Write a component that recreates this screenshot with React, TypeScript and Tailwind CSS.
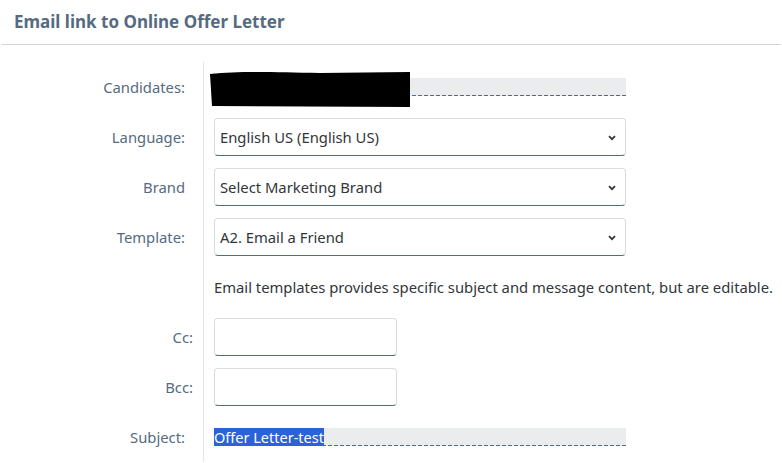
const labelCls = 'flex items-center justify-end border-r border-[#e5e5e5] text-[14.8px] text-[#556b82]';

const dashLine = 'absolute bottom-0 left-0 h-[1px] w-full bg-[repeating-linear-gradient(90deg,#556b82_0_4px,transparent_4px_6px)]';

const SelectBox = ({ value }: { value: string }) => (
    <div className="flex h-[38px] w-[412px] items-center justify-between rounded-[4px] border border-[#d9dde2] border-b-[#556b82] pl-[5px] pr-[9px] text-[14.8px] text-[#32363a]">
        <span>{value}</span>
        <svg width="8" height="6" viewBox="0 0 8 6" className="mt-[1px]">
            <path d="M1 1.2 L4 4.2 L7 1.2" fill="none" stroke="#32363a" strokeWidth="1.8" />
        </svg>
    </div>
);

const TextBox = () => (
    <div className="h-[38px] w-[183px] rounded-[4px] border border-[#d9dde2] border-b-[#556b82] bg-white" />
);

const Row = ({ label, pr = 'pr-[18px]', children }: { label: string; pr?: string; children?: React.ReactNode }) => (
    <div className="flex h-[50px]">
        <div className={`${labelCls} ${pr} w-[204px] shrink-0`}>{label}</div>
        <div className="flex flex-1 items-center pl-[10px]">{children}</div>
    </div>
);

export default function App() {
    return (
        <div className="h-[463px] w-[782px] overflow-hidden bg-white" style={{ fontFamily: '"Noto Sans", "Open Sans", sans-serif' }}>
            <div className="mx-[1px] flex h-[45px] items-center border-b border-[#d4d4d4] pl-[13px]">
                <h1 className="text-[17px] font-bold text-[#556b82]">Email link to Online Offer Letter</h1>
            </div>

            <div className="pt-[17px]">
                <Row label="Candidates:">
                    <div className="relative h-[18px] w-[412px] bg-[#ebecee]">
                        <div className={dashLine} />
                        {/* redaction */}
                        <svg className="absolute left-[-4px] top-[-7px]" width="202" height="37" viewBox="0 0 202 37">
                            <path d="M0 3 C30 0 60 1 110 2 L200 1 L200 36 L2 35 Z" fill="#000" />
                        </svg>
                    </div>
                </Row>
                <Row label="Language:">
                    <SelectBox value="English US (English US)" />
                </Row>
                <Row label="Brand">
                    <SelectBox value="Select Marketing Brand" />
                </Row>
                <Row label="Template:">
                    <SelectBox value="A2. Email a Friend" />
                </Row>
                <Row label="">
                    <p className="whitespace-nowrap text-[14.8px] text-[#32363a]">
                        Email templates provides specific subject and message content, but are editable.
                    </p>
                </Row>
                <Row label="Cc:" pr="pr-[10px]">
                    <TextBox />
                </Row>
                <Row label="Bcc:" pr="pr-[10px]">
                    <TextBox />
                </Row>
                <Row label="Subject:">
                    <div className="relative flex h-[18px] w-[412px] items-center bg-[#ebecee] text-[14.5px]">
                        <div className={dashLine} />
                        <span className="relative bg-[#2a62d8] leading-[18px] text-white">Offer Letter-test</span>
                    </div>
                </Row>
            </div>
        </div>
    );
}
